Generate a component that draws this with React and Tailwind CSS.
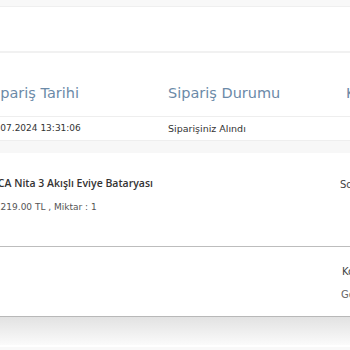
const font = { fontFamily: '"DejaVu Sans", sans-serif' };

const App = () => {
    return (
        <div className="w-[350px] h-[350px] overflow-hidden bg-white" style={font}>
            <div className="h-[7px] bg-[#f8f8f8] border-b border-[#efefef]" />
            <div className="h-[46px] bg-white border-b-2 border-[#f1f1f1]" />

            <div className="ml-[-13px] w-[420px]">
                <div className="flex items-end h-[64px] pb-[11px] border-b border-[#eeeeee] text-[14.5px] text-[#6b8aa8] whitespace-nowrap">
                    <div className="w-[181px] shrink-0">Sipariş Tarihi</div>
                    <div className="w-[178px] shrink-0">Sipariş Durumu</div>
                    <div className="shrink-0">Kargo</div>
                </div>
                <div className="flex items-center h-[24px] pt-[1px] border-b border-[#eeeeee] text-[9px] text-[#333] whitespace-nowrap">
                    <div className="w-[181px] shrink-0 ml-[-1px]">01.07.2024 13:31:06</div>
                    <div className="shrink-0 pl-[1px] text-[9.5px]">Siparişiniz Alındı</div>
                </div>
            </div>

            <div className="h-[12px] bg-[#f7f7f7]" />

            <div className="relative h-[94px] border-b border-[#bdbdbd] whitespace-nowrap">
                <div className="ml-[-8px] pt-[23px] text-[10.5px] font-semibold text-[#333] font-['Open_Sans',sans-serif]">ECA Nita 3 Akışlı Eviye Bataryası</div>
                <div className="ml-[-8px] pt-[9px] text-[9px] text-[#555]">1.219.00 TL , Miktar : 1</div>
                <div className="absolute left-[340px] top-[24px] text-[10px] text-[#444]">Sorun</div>
            </div>

            <div className="relative h-[70px] border-b border-[#b8b8b8] whitespace-nowrap">
                <div className="absolute left-[342px] top-[17px] text-[10px] text-[#444]">Kod</div>
                <div className="absolute left-[341px] top-[40px] text-[10px] text-[#666]">Gönder</div>
            </div>

            <div className="h-[28px] bg-gradient-to-b from-[#e2e2e2] to-[#fbfbfb]" />
            <div className="h-[2px] bg-white" />
            <div className="h-[10px] bg-[#f9f9f9]" />
        </div>
    );
};

export default App;
